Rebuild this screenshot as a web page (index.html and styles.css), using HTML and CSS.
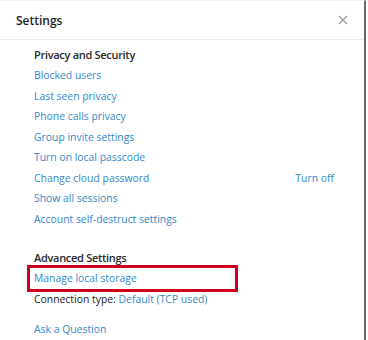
FILE: index.html
```html
<!DOCTYPE html>
<html>
<head>
<meta charset="utf-8">
<link rel="stylesheet" href="styles.css">
</head>
<body>
<div class="panel">
  <div class="header">
    <span class="title">Settings</span>
    <span class="close">
      <svg width="10" height="10" viewBox="0 0 10 10"><path d="M1 1L9 9M9 1L1 9" stroke="#9a9a9a" stroke-width="1.3" fill="none"/></svg>
    </span>
  </div>
  <div class="content">
    <div class="section-title">Privacy and Security</div>
    <a class="link">Blocked users</a>
    <a class="link">Last seen privacy</a>
    <a class="link">Phone calls privacy</a>
    <a class="link">Group invite settings</a>
    <a class="link">Turn on local passcode</a>
    <div class="row"><a class="link">Change cloud password</a><a class="link off">Turn off</a></div>
    <a class="link">Show all sessions</a>
    <a class="link">Account self-destruct settings</a>

    <div class="section-title adv">Advanced Settings</div>
    <div class="highlight"><a class="link">Manage local storage</a></div>
    <div class="plain">Connection type: <a class="inline">Default (TCP used)</a></div>
    <a class="link ask">Ask a Question</a>
  </div>
</div>
</body>
</html>
```
FILE: styles.css
```css
html, body {
  margin: 0;
  padding: 0;
  background: #fff;
}
body {
  font-family: "Open Sans", "Noto Sans", sans-serif;
  font-size: 10.4px;
  color: #222;
}
.panel {
  width: 366px;
  height: 340px;
  border-right: 2px solid #6a6a6a;
  border-top: 1px solid #f0f0f0;
  box-sizing: border-box;
  overflow: hidden;
}
.header {
  height: 39px;
  display: flex;
  align-items: center;
  justify-content: space-between;
  padding: 0 16px 0 16px;
  border-bottom: 1px solid #ececec;
  box-sizing: border-box;
}
.title {
  font-size: 12px;
  font-weight: 600;
  color: #1e1e1e;
}
.close {
  display: flex;
  width: 10px;
  height: 10px;
}
.content {
  display: flex;
  flex-direction: column;
  align-items: flex-start;
  padding: 5px 0 0 34px;
}
.section-title {
  font-weight: 600;
  font-size: 11px;
  letter-spacing: -0.3px;
  color: #2a2a2a;
  line-height: 20px;
  height: 20px;
}
.adv {
  margin-top: 19px;
}
.link {
  color: #3489cc;
  line-height: 20.5px;
  height: 20.5px;
  display: block;
}
.row {
  display: flex;
  width: 300px;
  justify-content: space-between;
}
.highlight {
  position: relative;
}
.highlight::after {
  content: "";
  position: absolute;
  left: -7px;
  top: -3px;
  width: 205px;
  bottom: -3px;
  border: 3px solid #d0021b;
}
.plain {
  line-height: 20px;
  color: #222;
}
.inline {
  color: #3489cc;
}
.ask {
  margin-top: 10px;
}
```
